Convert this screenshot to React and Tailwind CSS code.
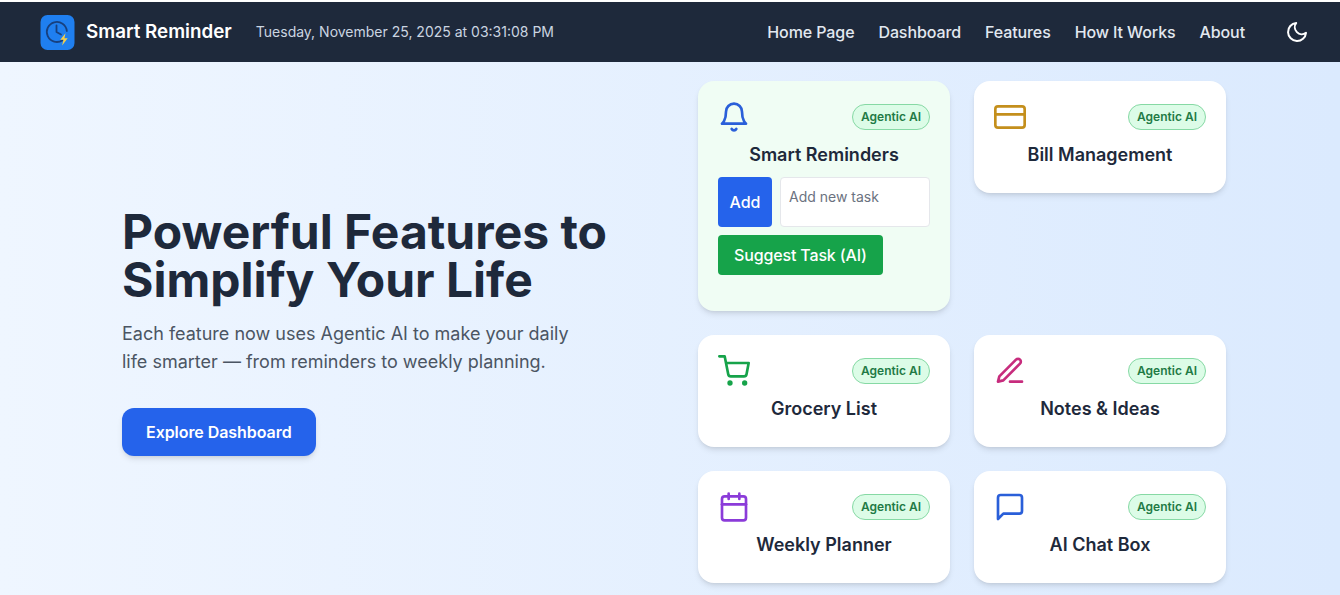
import React from 'react';
import { FiBell, FiCreditCard, FiShoppingCart, FiEdit3, FiCalendar, FiMessageSquare, FiMoon } from 'react-icons/fi';

const font = { fontFamily: 'Inter, sans-serif' };

// --- Logo ---
function Logo() {
  return (
    <svg width="35" height="35" viewBox="0 0 35 35" className="shrink-0">
      <rect x="0.5" y="0" width="34" height="35" rx="7" fill="#1f7ff0" />
      <path d="M22.5 25.2A10 10 0 1 1 26.8 16" fill="none" stroke="#17407f" strokeWidth="1.8" strokeLinecap="round" />
      <path d="M16.5 10.5v6.5l4.5 2.5" fill="none" stroke="#17407f" strokeWidth="1.8" strokeLinecap="round" strokeLinejoin="round" />
      <path d="M25.5 18.2l-5.2 6.6h3.2l-1.4 5.7 5.6-7.2h-3.3z" fill="#f6cf4b" />
    </svg>
  );
}

function Navbar() {
  const links = ['Home Page', 'Dashboard', 'Features', 'How It Works', 'About'];
  return (
    <nav className="flex items-center justify-between h-[60px] pl-10 pr-[31px] bg-[#1e293b] shadow-md">
      <div className="flex items-center">
        <Logo />
        <span className="ml-[11px] text-[18.8px] font-semibold text-white">Smart Reminder</span>
        <span className="ml-6 text-sm text-[#cbd5e1]">Tuesday, November 25, 2025 at 03:31:08 PM</span>
      </div>
      <div className="flex items-center">
        <ul className="flex items-center gap-6 text-base font-medium tracking-[-0.1px] text-[#e2e8f0]">
          {links.map((l) => <li key={l}>{l}</li>)}
        </ul>
        <FiMoon className="ml-[40px] w-6 h-6 text-white" />
      </div>
    </nav>
  );
}

function Badge() {
  return (
    <span className="px-2 py-[3px] text-xs leading-[18px] font-semibold text-[#1f7a45] bg-[#dcfce7] border border-[#86d9a4] rounded-full">
      Agentic AI
    </span>
  );
}

function Card({ icon: Icon, color, title, className = 'bg-white', children }) {
  return (
    <div className={`w-[252px] rounded-2xl px-5 pt-5 pb-6 shadow-md ${className}`}>
      <div className="flex items-center justify-between h-8">
        <Icon className={`w-8 h-8 ${color}`} />
        <Badge />
      </div>
      <h3 className="mt-2 text-lg leading-7 font-semibold text-center text-[#1e293b]">{title}</h3>
      {children}
    </div>
  );
}

export default function App() {
  return (
    <div style={font} className="h-[595px] overflow-hidden pt-[2px] bg-white">
      <Navbar />
      <main className="flex h-[533px] pt-[19px] pb-3 pl-[122px] bg-gradient-to-r from-[#eff6ff] to-[#dbeafe]">
        <section className="w-[576px] self-center">
          <h1 className="text-5xl leading-[48px] font-bold text-[#1e293b]">
            Powerful Features to<br />Simplify Your Life
          </h1>
          <p className="mt-4 text-lg leading-7 text-[#4b5563]">
            Each feature now uses Agentic AI to make your daily<br />life smarter — from reminders to weekly planning.
          </p>
          <button className="mt-8 h-12 px-6 rounded-xl bg-[#2563eb] text-base font-semibold tracking-[-0.06px] text-white shadow-md">
            Explore Dashboard
          </button>
        </section>
        <section className="grid grid-cols-[252px_252px] gap-6 items-start content-start">
          <Card icon={FiBell} color="text-[#2a5fd9]" title="Smart Reminders" className="bg-[#f0fdf4] h-[230px]">
            <div className="mt-2 flex gap-2">
              <button className="w-[54px] h-[50px] rounded bg-[#2563eb] text-base font-medium text-white">Add</button>
              <div className="flex-1 h-[50px] px-[8px] pt-[9px] rounded bg-white border border-[#e5e7eb] text-sm leading-5 text-[#6b7280]">
                Add new task
              </div>
            </div>
            <button className="mt-2 h-10 px-4 rounded bg-[#16a34a] text-base font-medium tracking-[-0.15px] text-white">Suggest Task (AI)</button>
          </Card>
          <Card icon={FiCreditCard} color="text-[#c48f1c]" title="Bill Management" />
          <Card icon={FiShoppingCart} color="text-[#16a34a]" title="Grocery List" />
          <Card icon={FiEdit3} color="text-[#c72c7d]" title="Notes & Ideas" />
          <Card icon={FiCalendar} color="text-[#8b3bd9]" title="Weekly Planner" />
          <Card icon={FiMessageSquare} color="text-[#2a5fd9]" title="AI Chat Box" />
        </section>
      </main>
    </div>
  );
}
